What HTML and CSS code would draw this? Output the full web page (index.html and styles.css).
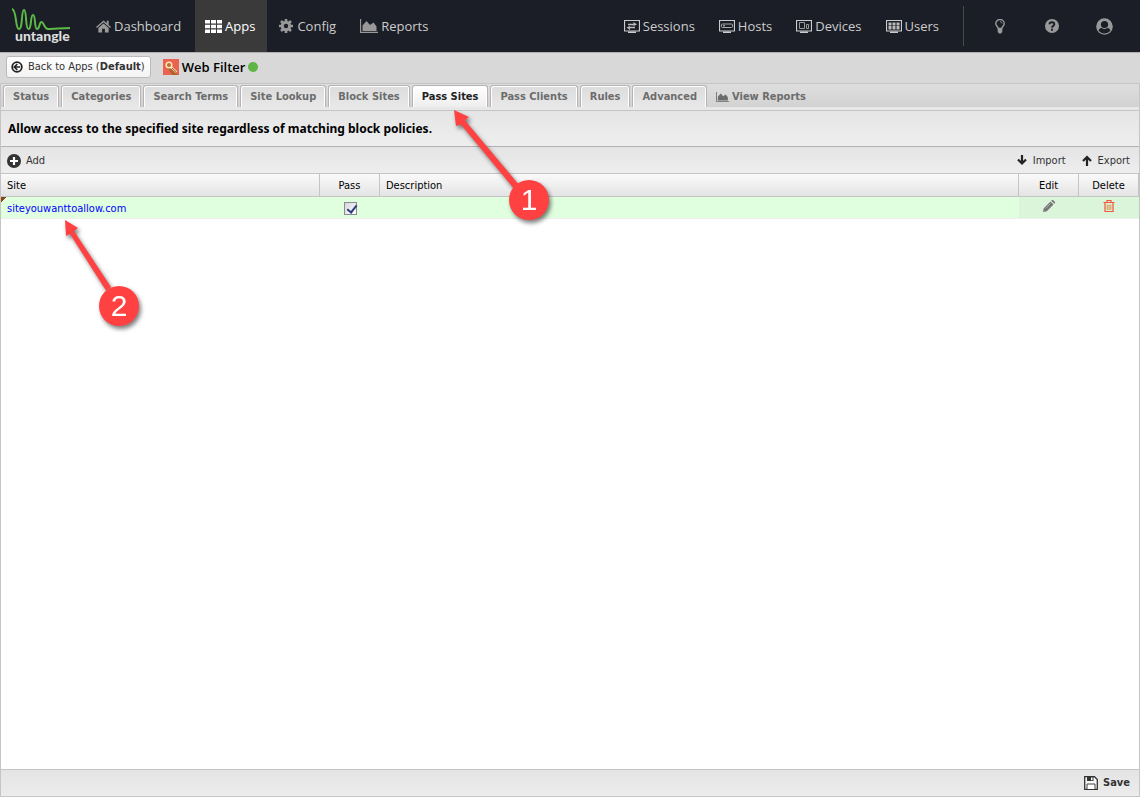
FILE: index.html
```html
<!DOCTYPE html>
<html lang="en">
<head>
<meta charset="utf-8">
<title>Web Filter - Pass Sites</title>
<link rel="stylesheet" href="styles.css">
</head>
<body>
<svg class="defs" width="0" height="0" aria-hidden="true">
  <symbol id="chart" viewBox="0 0 18 14"><path d="M.5 0v13.500H18" fill="none" stroke="currentColor" stroke-width="1.300"/><path d="M2.500 12V6.500L6.500 2l3.500 4 3.500-2.500 3 4V12z" fill="currentColor"/></symbol>
  <symbol id="screen" viewBox="0 0 16 13"><path d="M.5.5h15v10.500H.5z" fill="none" stroke="currentColor" stroke-width="1.200"/><path d="M4 11.500h8V13H4z" fill="currentColor"/></symbol>
</svg>
<header class="topbar">
  <a class="logo" href="#" aria-label="untangle">
    <svg width="64" height="38" viewBox="0 0 64 38">
      <path d="M1 2C6 3 4 22 8 22S10 3 13 3s1 19 4.500 19S19 8 22 8s1 14 4 14 2-7 4.500-7 2.500 7 6.500 7c6 0 14-1 22-1" fill="none" stroke="#5cb946" stroke-width="2"/>
      <text x="4" y="34" class="logo-text">untangle</text>
    </svg>
  </a>
  <nav class="nav">
    <a href="#"><svg width="15" height="14" viewBox="0 0 16 14"><path d="M8 1 0 8l1 1 7-6 7 6 1-1-2.500-2.200V1.500h-2v2.600zM8 4.300 2.500 9v5H6.500v-4h3v4h4V9z" fill="#999"/></svg>Dashboard</a>
    <a href="#" class="current"><svg width="17" height="13" viewBox="0 0 17 13"><path d="M0 0h5v3.500H0zm6 0h5v3.500H6zm6 0h5v3.500h-5zM0 4.700h5v3.500H0zm6 0h5v3.500H6zm6 0h5v3.500h-5zM0 9.400h5v3.500H0zm6 0h5v3.500H6zm6 0h5v3.500h-5z" fill="#fff"/></svg>Apps</a>
    <a href="#"><svg width="15" height="14" viewBox="0 0 15 14"><g stroke="#999" fill="none"><circle cx="7" cy="7" r="3.700" stroke-width="3"/><path d="M7 0v3M7 11v3M0 7h3M11 7h3M2 2l2 2M10 10l2 2M2 12l2-2M10 4l2-2" stroke-width="2.600"/></g></svg>Config</a>
    <a href="#"><svg class="dim" width="18" height="14"><use href="#chart"/></svg>Reports</a>
  </nav>
  <nav class="nav-right">
    <a href="#"><svg width="16" height="13"><use href="#screen"/><path d="M4 4.500h6M5 7.500h6" fill="none" stroke="#bbb" stroke-width="1.300"/><path d="M9.500 2 13 4.500 9.500 6zM6 6 2.500 7.500 6 10z" fill="#bbb"/></svg>Sessions</a>
    <a href="#"><svg width="16" height="13"><use href="#screen"/><rect x="2.500" y="4" width="11" height="3.500" rx="1" fill="none" stroke="#aaa"/><path d="M4 5.800h2" stroke="#ccc"/></svg>Hosts</a>
    <a href="#"><svg width="16" height="13"><use href="#screen"/><path d="M3.500 2.500h5v6h-5zM10.500 4.500h2v4h-2z" fill="none" stroke="#999"/></svg>Devices</a>
    <a href="#"><svg width="16" height="13"><use href="#screen"/><path d="M2.500 2.500h3v3h-3zm4 0h3v3h-3zm4 0h3v3h-3zM2.500 6h3v3.500h-3zm4 0h3v3.500h-3zm4 0h3v3.500h-3z" fill="#bbb"/></svg>Users</a>
  </nav>
  <div class="tools">
    <button type="button" aria-label="Suggestions"><svg width="10" height="15" viewBox="0 0 10 15"><path d="M3.200 9.500C3.200 7.800.8 7 .8 4.500a4.200 4 0 0 1 8.400 0c0 2.500-2.400 3.300-2.400 5z" fill="none" stroke="#999" stroke-width="1.400"/><path d="M5 2.700c1 0 2 .7 2 1.700" fill="none" stroke="#999"/><path d="M2.700 9.500h4.600v3.500L6 14.500H4L2.700 13z" fill="#999"/></svg></button>
    <button type="button" aria-label="Help"><svg width="14" height="14" viewBox="0 0 14 14"><circle cx="7" cy="7" r="7" fill="#999"/><path d="M4.500 5.300C4.500 2.500 9.300 2.600 9.300 5.200 9.300 7 7 6.800 7 8.700M7 9.800v1.900" fill="none" stroke="#1b1e26" stroke-width="1.900"/></svg></button>
    <button type="button" aria-label="Account"><svg width="17" height="17" viewBox="0 0 17 17"><circle cx="8.500" cy="8.500" r="8.300" fill="#999"/><circle cx="8.500" cy="6.500" r="3.600" fill="#1b1e26"/><path d="M2.500 12.500c1-2 2-2.500 3.200-2.500 1.500 1.200 4.100 1.200 5.600 0 1.200 0 2.200.5 3.200 2.500-3 4-9 4-12 0z" fill="#1b1e26"/></svg></button>
  </div>
</header>

<div class="appbar">
  <button type="button" class="back"><svg width="12" height="12" viewBox="0 0 12 12"><circle cx="6" cy="6" r="4.800" fill="none" stroke="#222" stroke-width="1.800"/><path d="M6.300 3 3.300 6l3 3M3.500 6H9" fill="none" stroke="#222" stroke-width="1.600"/></svg><span>Back to Apps (<b>Default</b>)</span></button>
  <h1 class="title"><svg width="16" height="16" viewBox="0 0 16 16"><path d="M0 0h16v16H0z" fill="#ea6351"/><path d="m8 8 7 8H9L4 8z" fill="#b5622c"/><circle cx="6" cy="6" r="2.800" fill="#bd6c2c" stroke="#ffe7bd" stroke-width="1.500"/><path d="m8 8 5.500 5" stroke="#ffe7bd" stroke-width="2.200"/><path d="m9 9 4 3.700" stroke="#8c5926"/></svg><span>Web Filter</span><span class="status-dot"></span></h1>
</div>

<main class="panel">
  <div class="tabs" role="tablist">
    <button type="button" role="tab">Status</button>
    <button type="button" role="tab">Categories</button>
    <button type="button" role="tab">Search Terms</button>
    <button type="button" role="tab">Site Lookup</button>
    <button type="button" role="tab">Block Sites</button>
    <button type="button" role="tab" class="active" aria-selected="true">Pass Sites</button>
    <button type="button" role="tab">Pass Clients</button>
    <button type="button" role="tab">Rules</button>
    <button type="button" role="tab">Advanced</button>
    <button type="button" class="reports"><svg width="13" height="10" viewBox="0 0 18 14"><use href="#chart"/></svg>View Reports</button>
  </div>
  <h2 class="heading">Allow access to the specified site regardless of matching block policies.</h2>
  <div class="toolbar">
    <button type="button" class="add"><svg width="14" height="14" viewBox="0 0 14 14"><circle cx="7" cy="7" r="7" fill="#333"/><path d="M7 3v8M3 7h8" stroke="#fff" stroke-width="2.200"/></svg>Add</button>
    <button type="button" class="import"><svg width="12" height="11" viewBox="0 0 12 11"><path d="M6 0v9M2 4.500l4 4 4-4" fill="none" stroke="#222" stroke-width="2.200"/></svg>Import</button>
    <button type="button"><svg width="12" height="11" viewBox="0 0 12 11"><path d="M6 11V2M2 6l4-4 4 4" fill="none" stroke="#222" stroke-width="2.200"/></svg>Export</button>
  </div>
  <table class="grid">
    <colgroup><col class="c-site"><col class="c-small"><col><col class="c-small"><col class="c-small"></colgroup>
    <thead><tr><th>Site</th><th class="mid">Pass</th><th>Description</th><th class="mid">Edit</th><th class="mid">Delete</th></tr></thead>
    <tbody><tr>
      <td class="dirty">siteyouwanttoallow.com</td>
      <td class="mid"><input type="checkbox" checked aria-label="Pass"></td>
      <td></td>
      <td class="mid action"><button type="button" aria-label="Edit"><svg width="12" height="12" viewBox="0 0 12 12"><path d="m0 12 .8-3.800L7.500 1.500l3 3L3.800 11.200zM8.200.8 9 0h1l2 2v1l-.8.800z" fill="#777"/><path d="m2.500 8.500 5-5" stroke="#aaa"/></svg></button></td>
      <td class="mid action"><button type="button" aria-label="Delete"><svg width="12" height="12" viewBox="0 0 12 12"><path d="M.5 2.500h11M4 2.500v-2h4v2M2 3v8.500h8V3" fill="none" stroke="#f0563a" stroke-width="1.200"/><path d="M4.200 4.500V10M6 4.500V10M7.800 4.500V10" stroke="#e08a4a"/></svg></button></td>
    </tr></tbody>
  </table>
  <footer class="footer"><button type="button"><svg width="14" height="14" viewBox="0 0 14 14"><path d="M.7.700h9.800l2.800 2.800v9.800H.7z" fill="#f8f8f8" stroke="#333" stroke-width="1.300"/><path d="M3 1h6.500v4H3z" fill="#333"/><path d="M7 1.500h1.500v2.700H7z" fill="#fff"/><path d="M3 13V8h8v5" fill="#fff" stroke="#444"/></svg>Save</button></footer>
</main>

<svg class="callout one" width="110" height="130" viewBox="0 0 110 130"><path d="m4 0 15 7-4 3.500L70 76l-5 4L11 14.500 6 16z"/><circle cx="79" cy="90" r="20"/><text x="79" y="100">1</text></svg>
<svg class="callout two" width="90" height="120" viewBox="0 0 90 120"><path d="m5 0 13 8-4 3 37 56-5 3.500L10 14l-4 2z"/><circle cx="59" cy="86" r="20"/><text x="59" y="96">2</text></svg>
</body>
</html>
```
FILE: styles.css
```css
* { box-sizing: border-box; }
body {
  margin: 0;
  min-height: 100vh;
  display: flex;
  flex-direction: column;
  position: relative;
  background: #d8d8d8;
  color: #000;
  font: 11px/16px "DejaVu Sans Condensed", "DejaVu Sans", sans-serif;
  font-stretch: condensed;
}
svg { flex: none; }
.defs { position: absolute; }
button {
  font: inherit;
  color: inherit;
  border: 0;
  padding: 0;
  background: none;
  display: inline-flex;
  align-items: center;
  white-space: nowrap;
}

.topbar {
  display: flex;
  height: 52px;
  background: #1b1e26;
  color: #ccc;
  font: 13px/18px "Open Sans", "Noto Sans", sans-serif;
}
.topbar a { color: #ccc; text-decoration: none; display: flex; align-items: center; }
.topbar .logo { width: 86px; padding-left: 11px; }
.logo-text { font: 900 14px Lato, sans-serif; fill: #ddd; }
.nav { display: flex; gap: 2px; }
.nav a { padding: 0 12px 0 10px; gap: 3px; }
.topbar .current { background: #3a3a3a; color: #fff; }
.dim { color: #999; }
.nav-right { display: flex; gap: 24px; margin-left: auto; padding-right: 24px; }
.nav-right a { gap: 3px; }
.tools { display: flex; margin: 6px 10px 6px 0; border-left: 1px solid #3d4f45; padding-left: 10px; }
.tools button { width: 52px; justify-content: center; }

.appbar {
  display: flex;
  align-items: center;
  gap: 12px;
  height: 31px;
  padding: 0 6px 2px;
  border-top: 1px solid #b5b0b0;
}
.back {
  height: 22px;
  padding: 0 5px 0 4px;
  gap: 5px;
  border: 1px solid #bbb;
  border-radius: 3px;
  background: linear-gradient(#fff, #f3f3f3);
  color: #333;
}
.title {
  display: flex;
  align-items: center;
  gap: 3px;
  margin: 0;
  font: 600 13px/18px "Open Sans", "Noto Sans", sans-serif;
}
.status-dot { width: 10px; height: 10px; border-radius: 50%; background: #5cb544; }

.panel {
  flex: 1;
  display: flex;
  flex-direction: column;
  border: 1px solid #c5c5c5;
  background: #fff;
}
.tabs {
  display: flex;
  align-items: flex-end;
  gap: 2px;
  height: 26px;
  padding: 0 2px;
  border-bottom: 3px solid #e8e8e8;
  background: linear-gradient(#dedede, #d2d2d2);
  box-shadow: 0 1px #c5c5c5;
}
.tabs button {
  height: 22px;
  padding: 0 9px;
  border: 1px solid #b8b2b4;
  border-bottom: 0;
  border-radius: 3px 3px 0 0;
  box-shadow: inset 1px 1px #fff, inset -1px 0 #fff;
  background: linear-gradient(#dcdcdc, #e8e8e8);
  color: #6c6c6c;
  font-weight: bold;
}
.tabs .active { background: linear-gradient(#fff, #eee); color: #222; }
.tabs .reports { padding: 0 6px; border-color: transparent; background: none; box-shadow: none; gap: 3px; }
.heading {
  margin: 1px 0 0;
  padding: 9px 7px;
  border-bottom: 1px solid #b5b0b2;
  background: linear-gradient(#e5e5e5, #eee);
  font: 700 12px/17px "Noto Sans", sans-serif;
}
.toolbar {
  display: flex;
  height: 26px;
  padding: 1px 9px 0 6px;
  gap: 15px;
  background: linear-gradient(#e4e4e4, #eee);
  color: #333;
}
.toolbar button { gap: 5px; }
.toolbar .import { margin-left: auto; }

.grid { width: 100%; table-layout: fixed; border-collapse: separate; border-spacing: 0; }
.c-site { width: 319px; }
.c-small { width: 60px; }
th {
  height: 24px;
  padding: 2px 6px 0;
  border: solid #c5c5c5;
  border-width: 1px 1px 1px 0;
  background: linear-gradient(#fafafa, #e4e4e4);
  font-weight: normal;
  text-align: left;
}
td { height: 22px; padding: 2px 6px 0; border-bottom: 1px solid #eee; background: #dfffdf; color: #00f; }
.mid { text-align: center; }
.action { padding-top: 1px; background: #daf5da; vertical-align: top; }
td button, td input { vertical-align: middle; }
.dirty { background: linear-gradient(135deg, #8b4513 4px, #dfffdf 4px); }
td input {
  appearance: none;
  width: 13px;
  height: 13px;
  margin: 0;
  border: 1px solid #8a8a94;
  background: linear-gradient(135deg, #d5d5dc, #fff);
}
td input::before {
  content: "";
  display: block;
  width: 4px;
  height: 8px;
  margin: 0 0 0 4px;
  border: solid #2c3c80;
  border-width: 0 2px 2px 0;
  transform: rotate(38deg);
}
.footer {
  display: flex;
  justify-content: flex-end;
  height: 27px;
  margin-top: auto;
  padding-right: 9px;
  border-top: 1px solid #c5c5c5;
  background: linear-gradient(#e4e4e4, #ececec);
  color: #333;
  font-weight: bold;
}
.footer button { gap: 5px; }

.callout { position: absolute; overflow: visible; fill: #ff4141; filter: drop-shadow(2px 3px 2px rgba(0, 0, 0, .5)); pointer-events: none; }
.callout text { fill: #fff; font: 30px "Liberation Sans", sans-serif; text-anchor: middle; }
.one { left: 450px; top: 110px; }
.two { left: 60px; top: 220px; }
```
